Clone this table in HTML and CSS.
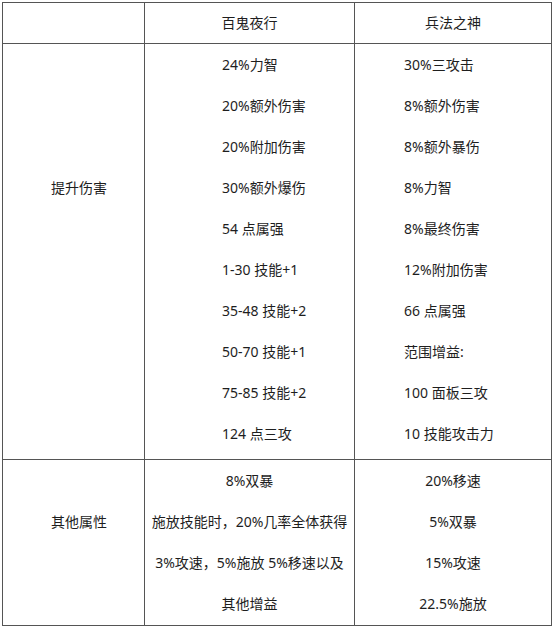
FILE: index.html
```html
<!DOCTYPE html>
<html lang="zh-CN">
<head>
<meta charset="utf-8">
<title>对比表</title>
<link rel="stylesheet" href="styles.css">
</head>
<body>
<div class="table">
  <div class="cell head"></div>
  <div class="cell head center">百鬼夜行</div>
  <div class="cell head center">兵法之神</div>

  <div class="cell label label-1">提升伤害</div>
  <div class="cell list list-a">
    <div class="line">24%力智</div>
    <div class="line">20%额外伤害</div>
    <div class="line">20%附加伤害</div>
    <div class="line">30%额外爆伤</div>
    <div class="line">54 点属强</div>
    <div class="line">1-30 技能+1</div>
    <div class="line">35-48 技能+2</div>
    <div class="line">50-70 技能+1</div>
    <div class="line">75-85 技能+2</div>
    <div class="line">124 点三攻</div>
  </div>
  <div class="cell list list-b">
    <div class="line">30%三攻击</div>
    <div class="line">8%额外伤害</div>
    <div class="line">8%额外暴伤</div>
    <div class="line">8%力智</div>
    <div class="line">8%最终伤害</div>
    <div class="line">12%附加伤害</div>
    <div class="line">66 点属强</div>
    <div class="line">范围增益:</div>
    <div class="line">100 面板三攻</div>
    <div class="line">10 技能攻击力</div>
  </div>

  <div class="cell label label-2">其他属性</div>
  <div class="cell list center">
    <div class="line">8%双暴</div>
    <div class="line">施放技能时，20%几率全体获得</div>
    <div class="line">3%攻速，5%施放 5%移速以及</div>
    <div class="line">其他增益</div>
  </div>
  <div class="cell list center">
    <div class="line">20%移速</div>
    <div class="line">5%双暴</div>
    <div class="line">15%攻速</div>
    <div class="line">22.5%施放</div>
  </div>
</div>
</body>
</html>
```

FILE: styles.css
```css
html, body {
  margin: 0;
  padding: 0;
  background: #ffffff;
}

body {
  font-family: "Noto Sans", "Noto Sans CJK SC", sans-serif;
  font-size: 14px;
  color: #1e1e1e;
}

.table {
  display: grid;
  grid-template-columns: 142px 210px 197px;
  grid-template-rows: 41px 416px 166px;
  width: 550px;
  margin: 2px 0 0 2px;
  border-top: 1px solid #555555;
  border-left: 1px solid #555555;
  box-sizing: border-box;
}

.cell {
  box-sizing: border-box;
  border-right: 1px solid #555555;
  border-bottom: 1px solid #555555;
}

.head {
  line-height: 39px;
}

.center {
  text-align: center;
}

.label {
  padding-left: 48px;
  line-height: 41px;
}

.label-1 {
  padding-top: 123px;
}

.label-2 {
  padding-top: 41px;
}

.list {
  padding-top: 0;
}

.list-a {
  padding-left: 77px;
}

.list-b {
  padding-left: 49px;
}

.line {
  line-height: 41px;
  height: 41px;
  white-space: nowrap;
}
```
